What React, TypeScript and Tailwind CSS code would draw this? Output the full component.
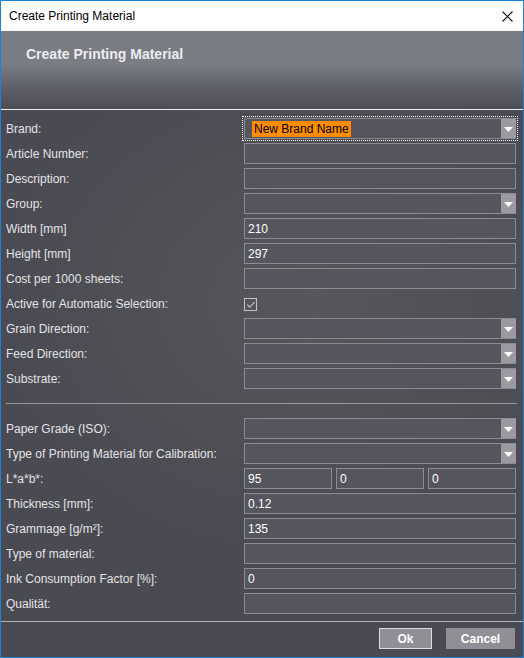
import { Check } from 'lucide-react';

type Row = { label: string; kind: 'text' | 'combo' | 'check' | 'lab'; value?: string };

const topRows: Row[] = [
  { label: 'Article Number:', kind: 'text' },
  { label: 'Description:', kind: 'text' },
  { label: 'Group:', kind: 'combo' },
  { label: 'Width [mm]', kind: 'text', value: '210' },
  { label: 'Height [mm]', kind: 'text', value: '297' },
  { label: 'Cost per 1000 sheets:', kind: 'text' },
  { label: 'Active for Automatic Selection:', kind: 'check' },
  { label: 'Grain Direction:', kind: 'combo' },
  { label: 'Feed Direction:', kind: 'combo' },
  { label: 'Substrate:', kind: 'combo' },
];

const bottomRows: Row[] = [
  { label: 'Paper Grade (ISO):', kind: 'combo' },
  { label: 'Type of Printing Material for Calibration:', kind: 'combo' },
  { label: 'L*a*b*:', kind: 'lab' },
  { label: 'Thickness [mm]:', kind: 'text', value: '0.12' },
  { label: 'Grammage [g/m²]:', kind: 'text', value: '135' },
  { label: 'Type of material:', kind: 'text' },
  { label: 'Ink Consumption Factor [%]:', kind: 'text', value: '0' },
  { label: 'Qualität:', kind: 'text' },
];

function Arrow() {
  return (
    <div className="w-[15px] h-full bg-[#9a9aa0] flex items-center justify-center pt-[2px]">
      <svg width="9" height="5" viewBox="0 0 9 5">
        <path d="M0 0H9L4.5 5Z" fill="#ffffff" />
      </svg>
    </div>
  );
}

function TextBox({ value, className = 'w-[272px]' }: { value?: string; className?: string }) {
  return (
    <div className={`${className} h-[21px] border border-[#8b8b91] bg-[#55555d] flex items-center pl-[3px] text-white`}>
      {value}
    </div>
  );
}

function Combo() {
  return (
    <div className="w-[272px] h-[21px] border border-[#8b8b91] border-r-0 bg-[#55555d] flex justify-end">
      <Arrow />
    </div>
  );
}

function Field({ row }: { row: Row }) {
  if (row.kind === 'combo') return <Combo />;
  if (row.kind === 'check')
    return (
      <div className="h-[21px] flex items-center pt-[2px]">
        <div className="w-[13px] h-[13px] border border-[#c4c4c8] flex items-center justify-center">
          <Check className="w-[10px] h-[10px] text-[#b8b8bc]" strokeWidth={3} />
        </div>
      </div>
    );
  if (row.kind === 'lab')
    return (
      <div className="flex gap-[4px]">
        <TextBox value="95" className="w-[88px]" />
        <TextBox value="0" className="w-[88px]" />
        <TextBox value="0" className="w-[88px]" />
      </div>
    );
  return <TextBox value={row.value} />;
}

function FormRow({ row }: { row: Row }) {
  return (
    <div className="flex h-[21px] items-center">
      <div className="w-[243px] pl-[5px] text-[#e4e4e6]">{row.label}</div>
      <Field row={row} />
    </div>
  );
}

export default function App() {
  return (
    <div
      className="w-[524px] h-[658px] border border-[#1883d7] flex flex-col text-[12px] overflow-hidden"
      style={{ fontFamily: '"Liberation Sans", Arial, sans-serif' }}
    >
      <div className="h-[30px] shrink-0 bg-white flex items-center justify-between pl-[8px] pr-[10px] text-black">
        <span className="text-[12px]">Create Printing Material</span>
        <svg width="11" height="11" viewBox="0 0 11 11">
          <path d="M0.5 0.5L10.5 10.5M10.5 0.5L0.5 10.5" stroke="#111" strokeWidth="1.1" />
        </svg>
      </div>

      <div className="h-[78px] shrink-0 bg-[linear-gradient(to_bottom,#7a7c83_0%,#7b7d84_42%,#5d5e65_75%,#4d4e55_100%)] pl-[25px] pt-[13px]">
        <h1 className="text-[14px] font-bold text-[#ececee]">Create Printing Material</h1>
      </div>
      <div className="h-[1px] shrink-0 bg-[#f0f0f0]" />

      <div className="flex-1 flex flex-col bg-[#4a4a52] bg-[radial-gradient(ellipse_60%_45%_at_60%_35%,#56565b_0%,#4a4a52_100%)]">
        <div className="flex flex-col gap-[4px] pt-[8px]">
          <div className="flex h-[21px] items-center">
            <div className="w-[243px] pl-[5px] text-[#e4e4e6]">Brand:</div>
            <div className="w-[272px] h-[21px] border border-[#8b8b91] border-r-0 bg-[#55555d] flex items-center justify-between outline-1 outline-dotted outline-white outline-offset-1">
              <span className="ml-[7px] bg-[#ff8c00] text-black text-[12px] leading-[16px] px-[2px]">New Brand Name</span>
              <Arrow />
            </div>
          </div>
          {topRows.map((r) => (
            <FormRow key={r.label} row={r} />
          ))}
        </div>

        <div className="h-[1px] bg-[#9a9aa0] ml-[5px] mr-[6px] mt-[14px] mb-[14px]" />

        <div className="flex flex-col gap-[4px]">
          {bottomRows.map((r) => (
            <FormRow key={r.label} row={r} />
          ))}
        </div>

        <div className="h-[1px] bg-[#b4b4b8] mt-[7px]" />

        <div className="flex justify-end gap-[14px] pt-[6px] pr-[8px]">
          <button className="w-[53px] h-[21px] bg-[#8f8f95] border border-[#dcdcde] text-white font-bold text-[12px]">
            Ok
          </button>
          <button className="w-[69px] h-[21px] bg-[#8f8f95] text-white font-bold text-[12px]">Cancel</button>
        </div>
      </div>
    </div>
  );
}
